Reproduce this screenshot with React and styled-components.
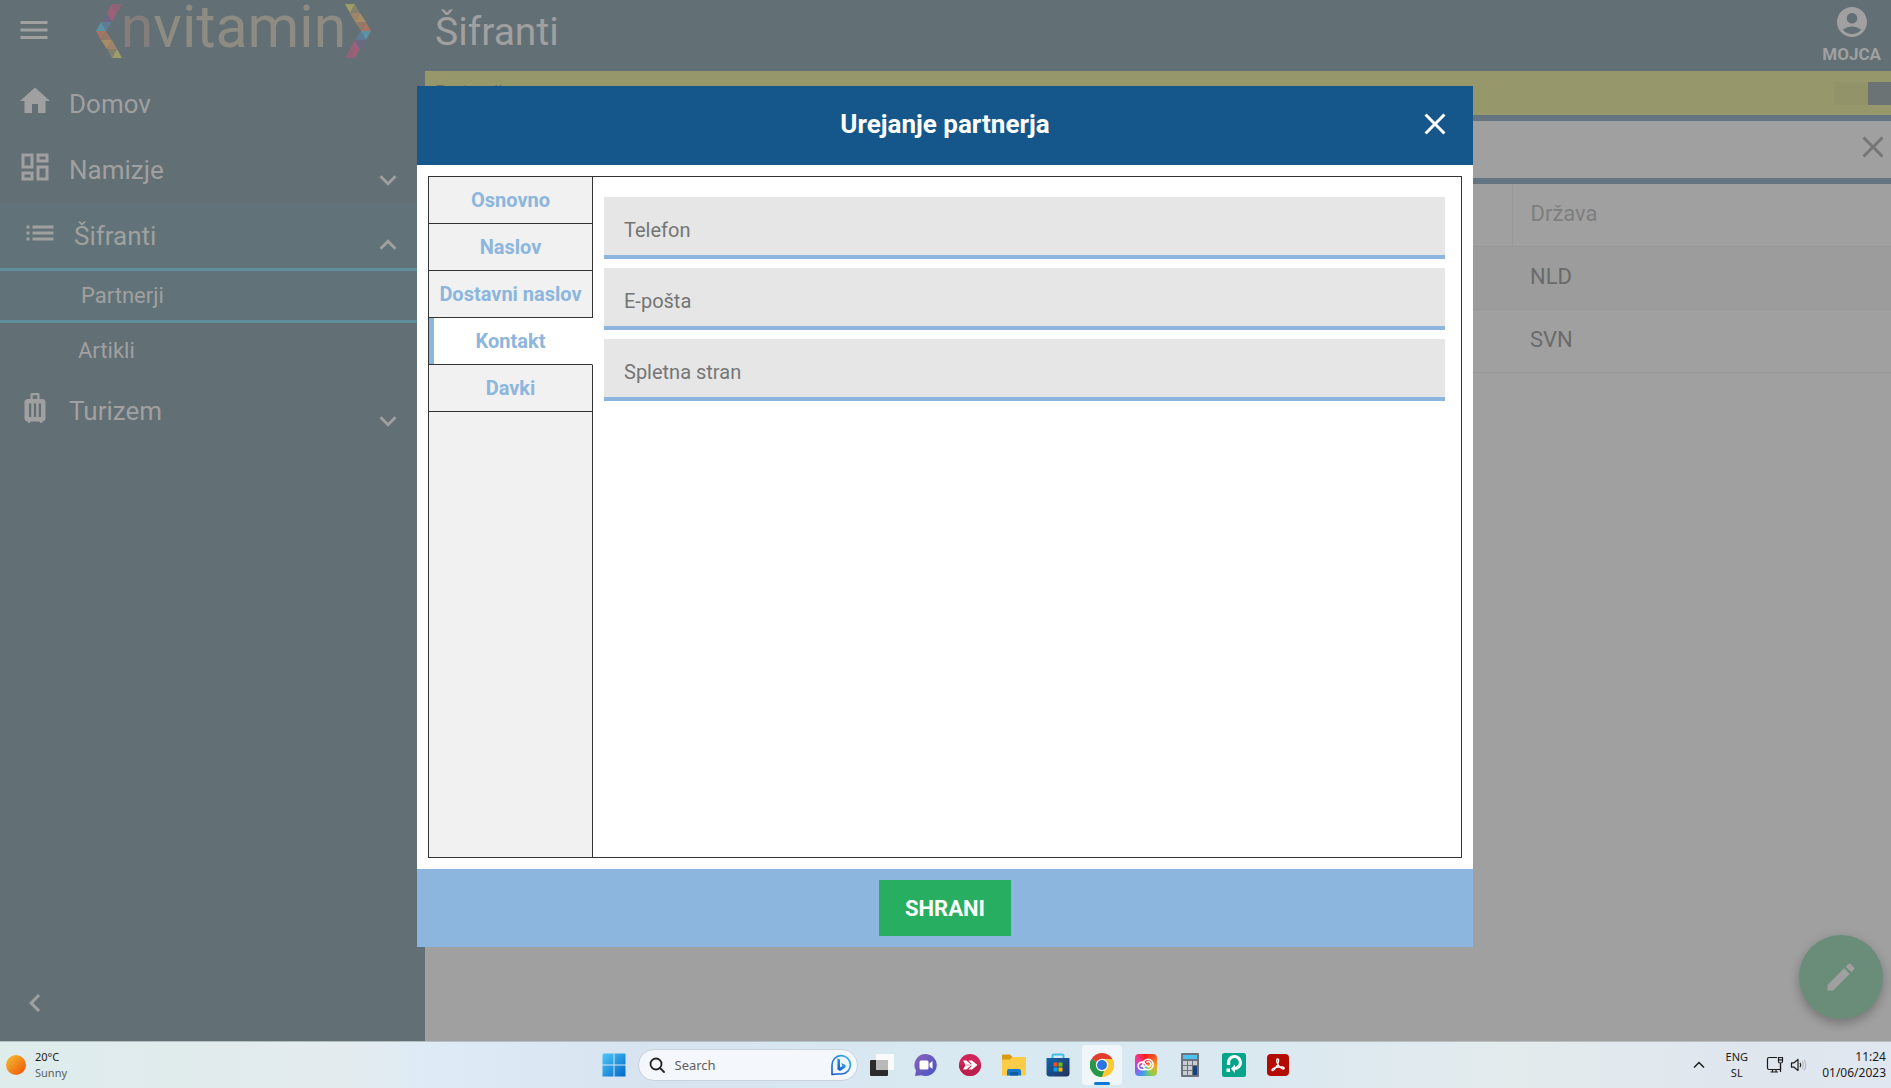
import React from 'react';
import styled, { createGlobalStyle, css } from 'styled-components';
import {
  MdMenu,
  MdHome,
  MdOutlineDashboard,
  MdList,
  MdLuggage,
  MdExpandMore,
  MdExpandLess,
  MdChevronLeft,
  MdAccountCircle,
  MdClose,
  MdModeEdit,
} from 'react-icons/md';

const MENU = [
  { id: 'home', label: 'Domov', icon: MdHome },
  { id: 'desk', label: 'Namizje', icon: MdOutlineDashboard, arrow: MdExpandMore },
  {
    id: 'codes',
    label: 'Šifranti',
    icon: MdList,
    arrow: MdExpandLess,
    active: true,
    children: [{ label: 'Partnerji', active: true }, { label: 'Artikli' }],
  },
  { id: 'tourism', label: 'Turizem', icon: MdLuggage, arrow: MdExpandMore },
];

const TABS = ['Osnovno', 'Naslov', 'Dostavni naslov', 'Kontakt', 'Davki'];

const FIELDS = [
  { name: 'phone', label: 'Telefon' },
  { name: 'email', label: 'E-pošta' },
  { name: 'web', label: 'Spletna stran' },
];

const COUNTRIES = ['NLD', 'SVN'];

const LogoBracket = ({ flip }) => (
  <Bracket viewBox="0 0 26 54" $flip={flip}>
    <path d="M16 0H26L21 9Z" fill="#8f6377" />
    <path d="M16 0L21 9H11Z" fill="#9a6179" />
    <path d="M11 9H21L16 18Z" fill="#9a6179" />
    <path d="M11 9L16 18H5Z" fill="#6c6883" />
    <path d="M5 18H16L10 27Z" fill="#5f7c96" />
    <path d="M5 18L10 27H0Z" fill="#5b93a5" />
    <path d="M0 27H10L5 36Z" fill="#a87463" />
    <path d="M10 27L16 36H5Z" fill="#93796a" />
    <path d="M5 36H16L11 45Z" fill="#a88c68" />
    <path d="M16 36L21 45H11Z" fill="#9c8568" />
    <path d="M11 45H21L16 54Z" fill="#857f70" />
    <path d="M21 45L26 54H16Z" fill="#9d9e66" />
  </Bracket>
);

const MenuEntry = ({ item }) => {
  const Icon = item.icon;
  const Arrow = item.arrow;
  return (
    <li>
      <MenuLink href="#" $active={item.active}>
        <Icon size={36} />
        <MenuText>{item.label}</MenuText>
        {Arrow && (
          <ArrowBox>
            <Arrow size={34} />
          </ArrowBox>
        )}
      </MenuLink>
      {item.children && (
        <List>
          {item.children.map(child => (
            <li key={child.label}>
              <SubLink href="#" $active={child.active}>
                {child.label}
              </SubLink>
            </li>
          ))}
        </List>
      )}
    </li>
  );
};

const Sidebar = () => (
  <Side>
    <SideHead>
      <IconButton aria-label="Meni">
        <MdMenu size={36} />
      </IconButton>
      <Logo>
        <LogoBracket />
        <LogoText>
          <span>n</span>vitamin
        </LogoText>
        <LogoBracket flip />
      </Logo>
    </SideHead>
    <List>
      {MENU.map(item => (
        <MenuEntry key={item.id} item={item} />
      ))}
    </List>
    <SideFoot>
      <IconButton aria-label="Skrij meni">
        <MdChevronLeft size={36} />
      </IconButton>
    </SideFoot>
  </Side>
);

const Page = () => (
  <Main>
    <PageHead>
      <PageTitle>Šifranti</PageTitle>
      <User>
        <MdAccountCircle size={36} />
        MOJCA
      </User>
    </PageHead>
    <SectionBar>
      <SectionName>Partnerji</SectionName>
      <Toggle aria-label="Preklop">
        <i />
        <b />
      </Toggle>
    </SectionBar>
    <SearchBar>
      <IconButton aria-label="Počisti" $color="#767676">
        <MdClose size={36} />
      </IconButton>
    </SearchBar>
    <Table>
      <thead>
        <tr>
          <th />
          <th>Država</th>
        </tr>
      </thead>
      <tbody>
        {COUNTRIES.map(code => (
          <tr key={code}>
            <td />
            <td>{code}</td>
          </tr>
        ))}
      </tbody>
    </Table>
    <Fab aria-label="Uredi">
      <MdModeEdit size={36} />
    </Fab>
  </Main>
);

const PartnerDialog = () => (
  <Overlay>
    <Dialog role="dialog" aria-labelledby="dialog-title">
      <DialogHead>
        <DialogTitle id="dialog-title">Urejanje partnerja</DialogTitle>
        <IconButton aria-label="Zapri" $color="#fff">
          <MdClose size={36} />
        </IconButton>
      </DialogHead>
      <DialogBody>
        <Box>
          <TabList role="tablist">
            {TABS.map(tab => (
              <Tab
                key={tab}
                role="tab"
                aria-selected={tab === 'Kontakt'}
                $active={tab === 'Kontakt'}
              >
                {tab}
              </Tab>
            ))}
            <TabRest />
          </TabList>
          <Fields>
            {FIELDS.map(field => (
              <Field
                key={field.name}
                name={field.name}
                aria-label={field.label}
                placeholder={field.label}
              />
            ))}
          </Fields>
        </Box>
      </DialogBody>
      <DialogFoot>
        <SaveButton>SHRANI</SaveButton>
      </DialogFoot>
    </Dialog>
  </Overlay>
);

const WindowsIcon = () => (
  <svg width="24" height="24" viewBox="0 0 24 24">
    <defs>
      <linearGradient id="win" x1="0" y1="0" x2="1" y2="1">
        <stop offset="0" stopColor="#4cc8f8" />
        <stop offset="1" stopColor="#0067c8" />
      </linearGradient>
    </defs>
    <path
      fill="url(#win)"
      d="M1.500 .5H11.500V11.500H.5V1.500ZM12.500 .5H23.500V11.500H12.500ZM.5 12.500H11.500V23.500H.5ZM12.500 12.500H23.500V23.500H12.500Z"
    />
  </svg>
);

const SearchIcon = () => (
  <svg width="16" height="16" viewBox="0 0 16 16" fill="none" stroke="#222" strokeWidth="1.800">
    <circle cx="7" cy="7" r="5.500" />
    <path d="M11 11L15 15" strokeLinecap="round" />
  </svg>
);

const BingIcon = () => (
  <svg width="22" height="22" viewBox="0 0 22 22">
    <defs>
      <linearGradient id="bing" x1="1" y1="0" x2="0" y2="1">
        <stop offset="0" stopColor="#35b8ea" />
        <stop offset="1" stopColor="#1b4fc4" />
      </linearGradient>
    </defs>
    <path
      d="M2 20.500V11A9.200 9.200 0 1 1 11.500 20H6.500Z"
      fill="#eef6fd"
      stroke="url(#bing)"
      strokeWidth="1.600"
      strokeLinejoin="round"
    />
    <path d="M7.500 4.500L10 5.500V13.500L12.500 12L11.200 9L15.500 11V13.500L10 17L7.500 15.500Z" fill="url(#bing)" />
  </svg>
);

const TaskViewIcon = () => (
  <svg width="24" height="24" viewBox="0 0 24 24">
    <rect x="0" y="7" width="18" height="16" rx="1" fill="#2b2b2b" />
    <rect x="6" y="1" width="18" height="16" rx="1" fill="#fafafa" />
    <rect x="6" y="7" width="12" height="10" fill="#b9b9b9" />
  </svg>
);

const ChatIcon = () => (
  <svg width="24" height="24" viewBox="0 0 24 24">
    <defs>
      <linearGradient id="chat" x1="0" y1="0" x2="1" y2="1">
        <stop offset="0" stopColor="#8a63b8" />
        <stop offset="1" stopColor="#4653c6" />
      </linearGradient>
    </defs>
    <path d="M12 1A11.500 11 0 1 1 7 22.200L1 23L2 17.500A11.500 11 0 0 1 12 1Z" fill="url(#chat)" />
    <rect x="5.500" y="7.500" width="9" height="9" rx="1.500" fill="#fff" />
    <path d="M15.500 10.500L18.500 8V16L15.500 13.500Z" fill="#fff" />
  </svg>
);

const ArrowsIcon = () => (
  <svg width="24" height="24" viewBox="0 0 24 24">
    <circle cx="12" cy="12" r="11" fill="#cf2457" />
    <path d="M1 12A11 11 0 0 0 23 12Z" fill="#bd1f4d" />
    <path d="M5 7.500H8.500L12.500 11H7Z" fill="#fff" />
    <path d="M5 16.500H8.500L12.500 13H7Z" fill="#fff" />
    <path d="M10.500 7.500H14L19.500 12L14 16.500H10.500L14 12.800H7V11.200H14Z" fill="#fff" />
  </svg>
);

const FolderIcon = () => (
  <svg width="24" height="24" viewBox="0 0 24 24">
    <path d="M0 2.500Q0 1.500 1 1.500H8L10.500 4H23Q24 4 24 5V8H0Z" fill="#d99c12" />
    <path d="M0 6.500H8L10.500 4H23Q24 4 24 5V22.500H0Z" fill="#fccb47" />
    <path d="M5 22.500V18Q5 16 7 16H17Q19 16 19 18V22.500Z" fill="#1279cc" />
    <path d="M8 22.500V20Q8 19 9 19H15Q16 19 16 20V22.500Z" fill="#0b5aa4" />
  </svg>
);

const StoreIcon = () => (
  <svg width="24" height="24" viewBox="0 0 24 24">
    <defs>
      <linearGradient id="store" x1="0" y1="0" x2="1" y2="1">
        <stop offset="0" stopColor="#0e67ae" />
        <stop offset="1" stopColor="#25305c" />
      </linearGradient>
    </defs>
    <path d="M6.500 6V2.500Q6.500 1.500 7.500 1.500H16.500Q17.500 1.500 17.500 2.500V6" fill="none" stroke="#43bdea" strokeWidth="2" />
    <path d="M.5 5H23.500V20.500Q23.500 23.500 20.500 23.500H3.500Q.5 23.500 .5 20.500Z" fill="url(#store)" />
    <path d="M7.500 9.500H11.500V13.500H7.500Z" fill="#f25022" />
    <path d="M12.500 9.500H16.500V13.500H12.500Z" fill="#7fba00" />
    <path d="M7.500 14.500H11.500V18.500H7.500Z" fill="#00a4ef" />
    <path d="M12.500 14.500H16.500V18.500H12.500Z" fill="#ffb900" />
  </svg>
);

const ChromeIcon = () => (
  <svg width="24" height="24" viewBox="0 0 24 24">
    <path d="M12 12L1.600 6A12 12 0 0 1 22.400 6Z" fill="#e33b2e" />
    <path d="M12 12L22.400 6A12 12 0 0 1 12 24Z" fill="#fcc934" />
    <path d="M12 12L12 24A12 12 0 0 1 1.600 6Z" fill="#279847" />
    <path d="M12 6H22.400A12 12 0 0 1 12 24L17.200 15Z" fill="#fcc934" />
    <path d="M1.600 6L6.800 15A6 6 0 0 0 14 17.700L12 24A12 12 0 0 1 1.600 6Z" fill="#279847" />
    <circle cx="12" cy="12" r="6.200" fill="#fff" />
    <circle cx="12" cy="12" r="5" fill="#2a74e6" />
  </svg>
);

const CloudIcon = () => (
  <CloudTile>
    <svg width="18" height="14" viewBox="0 0 18 14" fill="none" stroke="#fff" strokeWidth="1.500">
      <circle cx="11" cy="6.500" r="5.200" />
      <path d="M8.500 11.700H5A3.800 3.800 0 1 1 8.500 6.500L10.500 8.500A2.500 2.500 0 1 0 9.500 4.500" />
      <path d="M3.500 8.500Q6 6.500 8.500 9" />
    </svg>
  </CloudTile>
);

const CalcIcon = () => (
  <svg width="20" height="24" viewBox="0 0 20 24">
    <rect x="1" y="0" width="18" height="24" rx="1" fill="#6c757d" />
    <rect x="3" y="2" width="14" height="4" fill="#4cc2f1" />
    <path d="M3 8H7V12H3ZM8 8H12V12H8ZM13 8H17V12H13ZM3 13H7V17H3ZM8 13H12V17H8ZM3 18H7V22H3ZM8 18H12V22H8Z" fill="#c9ced2" />
    <path d="M13 13H17V22H13Z" fill="#14427f" />
  </svg>
);

const SupportIcon = () => (
  <svg width="24" height="24" viewBox="0 0 24 24">
    <rect width="24" height="24" rx="2.500" fill="#06a58b" />
    <path d="M6.500 12V10A6 6 0 1 1 12.500 15.500" fill="none" stroke="#fff" strokeWidth="3.200" />
    <path d="M13 11.500V20L9 15.800Z" fill="#fff" />
    <rect x="4.500" y="15.500" width="3.500" height="3.500" fill="#fff" />
  </svg>
);

const AcrobatIcon = () => (
  <svg width="22" height="22" viewBox="0 0 22 22">
    <rect width="22" height="22" rx="4" fill="#b30b00" />
    <path
      d="M10.500 5C12.500 5 11.500 8.500 10 11.500C8.500 14.500 6.500 17 5.200 16.500C4 15.500 7.500 13.500 11 13C14.500 12.500 17.500 13 17.200 14.500C16.500 16 13.500 14 11.500 11.500C9.800 9.200 9 5 10.500 5Z"
      fill="none"
      stroke="#fff"
      strokeWidth="1.300"
    />
  </svg>
);

const DisplayIcon = () => (
  <svg width="18" height="18" viewBox="0 0 18 18" fill="none" stroke="#1b1b1b" strokeWidth="1.200">
    <path d="M11 1.500H3Q1.500 1.500 1.500 3V12Q1.500 13.500 3 13.500H14.500V8M4.500 16H12M6.500 13.500V16M10 13.500V16" />
    <path d="M12.500 1.500H16.500V5.500Q16.500 7 14.500 7Q12.500 7 12.500 5.500ZM12.500 3.800H16.500M14.500 7V16" />
  </svg>
);

const SpeakerIcon = () => (
  <svg width="18" height="16" viewBox="0 0 18 16" fill="none" stroke="#1b1b1b" strokeWidth="1.200">
    <path d="M1.500 5.800H4L8 2.500V13.500L4 10.200H1.500Z" strokeLinejoin="round" />
    <path d="M10 5.800Q11.500 8 10 10.200" />
    <path d="M12 4Q14.500 8 12 12M14 2.500Q17.500 8 14 13.500" stroke="#b4bac1" />
  </svg>
);

const APPS = [
  { name: 'Task view', icon: TaskViewIcon },
  { name: 'Chat', icon: ChatIcon },
  { name: 'Remote', icon: ArrowsIcon },
  { name: 'Explorer', icon: FolderIcon },
  { name: 'Store', icon: StoreIcon },
  { name: 'Chrome', icon: ChromeIcon, open: true },
  { name: 'Creative Cloud', icon: CloudIcon },
  { name: 'Calculator', icon: CalcIcon },
  { name: 'Support', icon: SupportIcon },
  { name: 'Acrobat', icon: AcrobatIcon },
];

const Taskbar = () => (
  <Bar>
    <Weather>
      <Sun />
      <div>
        20°C
        <Muted>Sunny</Muted>
      </div>
    </Weather>
    <Apps>
      <AppButton aria-label="Start">
        <WindowsIcon />
      </AppButton>
      <SearchBox>
        <SearchIcon />
        <input type="text" placeholder="Search" aria-label="Search" />
        <BingIcon />
      </SearchBox>
      {APPS.map(({ name, icon: Icon, open }) => (
        <AppButton key={name} aria-label={name} $open={open}>
          <Icon />
        </AppButton>
      ))}
    </Apps>
    <Tray>
      <svg width="12" height="8" viewBox="0 0 12 8" fill="none" stroke="#1b1b1b" strokeWidth="1.500">
        <path d="M1 6.500L6 1.500L11 6.500" />
      </svg>
      <Language>
        <div>ENG</div>
        <div>SL</div>
      </Language>
      <TrayIcons>
        <DisplayIcon />
        <SpeakerIcon />
      </TrayIcons>
      <Clock>
        <div>11:24</div>
        <div>01/06/2023</div>
      </Clock>
    </Tray>
  </Bar>
);

export default function App() {
  return (
    <Screen>
      <GlobalStyle />
      <Desktop>
        <Sidebar />
        <Page />
        <PartnerDialog />
      </Desktop>
      <Taskbar />
    </Screen>
  );
}

const GlobalStyle = createGlobalStyle`
  * {
    box-sizing: border-box;
  }
  body {
    margin: 0;
    font-family: Roboto, sans-serif;
  }
  button,
  input {
    font-family: inherit;
    border: 0;
    border-radius: 0;
    padding: 0;
  }
  svg {
    display: block;
    flex-shrink: 0;
  }
`;

const Screen = styled.div`
  display: flex;
  flex-direction: column;
  height: 100vh;
`;

const Desktop = styled.div`
  position: relative;
  display: flex;
  flex: 1;
  min-height: 0;
  background: #a0a0a0;
`;

const IconButton = styled.button`
  display: flex;
  background: none;
  color: ${props => props.$color || '#a0a0a0'};
`;

const Side = styled.nav`
  display: flex;
  flex-direction: column;
  flex: 0 0 425px;
  background: #626f75;
  color: #a0a0a0;
`;

const SideHead = styled.div`
  display: flex;
  align-items: flex-start;
  height: 71px;
  padding: 4px 16px;
  gap: 44px;

  > button {
    margin-top: 8px;
  }
`;

const Logo = styled.div`
  display: flex;
  align-items: flex-start;
  justify-content: space-between;
  width: 275px;
`;

const Bracket = styled.svg`
  width: 26px;
  height: 54px;
  transform: ${props => (props.$flip ? 'rotate(180deg)' : 'none')};
`;

const LogoText = styled.div`
  margin: 0 -4px;
  color: #8e8b83;
  font-size: 59px;
  line-height: 46px;

  span {
    color: #857d7c;
  }
`;

const List = styled.ul`
  margin: 0;
  padding: 0;
  list-style: none;
`;

const MenuLink = styled.a`
  display: flex;
  align-items: center;
  height: ${props => (props.$active ? 65 : 66)}px;
  padding: 0 20px 0 ${props => (props.$active ? 22 : 17)}px;
  gap: 16px;
  color: inherit;
  font-size: 26px;
  text-decoration: none;
  background: ${props => (props.$active ? '#617379' : 'none')};

  > svg {
    margin-bottom: 6px;
  }
`;

const MenuText = styled.span`
  flex: 1;
`;

const ArrowBox = styled.span`
  align-self: flex-end;
  padding-bottom: 6px;
`;

const SubLink = styled.a`
  display: flex;
  align-items: center;
  height: 55px;
  padding-left: 78px;
  color: inherit;
  font-size: 22px;
  text-decoration: none;
  ${props =>
    props.$active &&
    css`
      padding-left: 81px;
      background: #617379;
      border-top: 3px solid #5f8f9f;
      border-bottom: 3px solid #5f8f9f;
    `}
`;

const SideFoot = styled.div`
  margin-top: auto;
  padding: 20px 17px;
`;

const Main = styled.main`
  display: flex;
  flex-direction: column;
  flex: 1;
  min-width: 0;
`;

const PageHead = styled.header`
  display: flex;
  justify-content: space-between;
  height: 71px;
  padding: 4px 10px;
  background: #626f75;
  color: #a0a0a0;
`;

const PageTitle = styled.h1`
  margin: 0;
  font-size: 39px;
  font-weight: 400;
  line-height: 56px;
`;

const User = styled.div`
  display: flex;
  flex-direction: column;
  align-items: center;
  font-size: 17px;
  font-weight: 700;
  line-height: 28px;
`;

const SectionBar = styled.div`
  display: flex;
  align-items: center;
  justify-content: space-between;
  height: 44px;
  padding-left: 10px;
  background: #96976a;
`;

const SectionName = styled.span`
  padding-bottom: 3px;
  color: #63706c;
  font-size: 18px;
`;

const Toggle = styled.button`
  display: flex;
  height: 23px;
  background: #929368;

  i {
    width: 34px;
  }
  b {
    width: 23px;
    height: 23px;
    background: #6b7375;
  }
`;

const SearchBar = styled.div`
  display: flex;
  align-items: center;
  justify-content: flex-end;
  height: 69px;
  padding-bottom: 5px;
  border-top: 6px solid #647581;
  border-bottom: 6px solid #647581;
`;

const Table = styled.table`
  width: 100%;
  border-collapse: collapse;
  table-layout: fixed;
  font-size: 22px;
  color: #6a6a6a;

  th,
  td {
    height: 63px;
    padding: 0 18px 2px;
    border-bottom: 1px solid #989898;
    text-align: left;
  }
  th {
    height: 62px;
    color: #7e7e7e;
    font-weight: 400;
  }
  th:first-child {
    border-right: 1px solid #989898;
  }
  th:last-child {
    width: 379px;
  }
  tbody tr:nth-child(odd) {
    background: #9c9c9c;
  }
`;

const Fab = styled.button`
  position: absolute;
  right: 8px;
  bottom: 22px;
  display: flex;
  align-items: center;
  justify-content: center;
  width: 84px;
  height: 84px;
  border-radius: 50%;
  background: #6a8d7a;
  color: #a0a0a0;
  box-shadow: 0 5px 10px rgba(0, 0, 0, 0.2), 0 2px 14px rgba(0, 0, 0, 0.08);
`;

const Overlay = styled.div`
  position: absolute;
  inset: 0;
  display: flex;
  justify-content: center;
  padding: 86px 1px 94px 0;
  pointer-events: none;
`;

const Dialog = styled.div`
  display: flex;
  flex-direction: column;
  width: 100%;
  max-width: 1056px;
  background: #fff;
  pointer-events: auto;
`;

const DialogHead = styled.div`
  display: grid;
  grid-template-columns: 36px 1fr 36px;
  align-items: center;
  height: 79px;
  padding: 0 20px 3px;
  background: #15578b;
  color: #fff;
`;

const DialogTitle = styled.h2`
  grid-column: 2;
  margin: 0;
  font-size: 26px;
  font-weight: 700;
  text-align: center;
`;

const DialogBody = styled.div`
  display: flex;
  flex: 1;
  padding: 11px;
`;

const Box = styled.div`
  display: flex;
  flex: 1;
  border: 1px solid #333;
`;

const TabList = styled.div`
  display: flex;
  flex-direction: column;
  flex: 0 0 164px;
`;

const Tab = styled.button`
  height: 47px;
  border-right: 1px solid #333;
  border-bottom: 1px solid #333;
  background: #f1f1f1;
  color: #8cb6dd;
  font-size: 20px;
  font-weight: 700;
  white-space: nowrap;
  ${props =>
    props.$active &&
    css`
      border-right-color: #fff;
      background: #fff;
      box-shadow: inset 5px 0 #8cb6dd;
    `}
`;

const TabRest = styled.div`
  flex: 1;
  border-right: 1px solid #333;
  background: #f1f1f1;
`;

const Fields = styled.div`
  display: flex;
  flex-direction: column;
  flex: 1;
  gap: 9px;
  padding: 20px 16px 20px 11px;
`;

const Field = styled.input`
  height: 62px;
  padding: 8px 20px 0;
  border-bottom: 4px solid #8cb6dd;
  background: #e6e6e6;
  color: #333;
  font-size: 20px;

  &::placeholder {
    color: #757575;
  }
`;

const DialogFoot = styled.div`
  display: flex;
  justify-content: center;
  padding: 11px;
  background: #8cb6dd;
`;

const SaveButton = styled.button`
  width: 132px;
  height: 56px;
  background: #27ae60;
  color: #fff;
  font-size: 22px;
  font-weight: 700;
`;

const Bar = styled.footer`
  display: grid;
  grid-template-columns: 1fr auto 1fr;
  align-items: center;
  height: 47px;
  border-top: 1px solid #b4bfc2;
  background: linear-gradient(
    90deg,
    #deecec 0%,
    #e3ebee 18%,
    #deebf6 23%,
    #d8e3f0 34%,
    #d8e9f1 50%,
    #d9e8f1 64%,
    #e3ebed 80%,
    #dfe6ee 92%,
    #e1e7f0 100%
  );
  color: #1b1b1b;
  font-family: 'Noto Sans', sans-serif;
  font-size: 11px;
  line-height: 16px;
`;

const Weather = styled.div`
  display: flex;
  align-items: center;
  padding-left: 6px;
  gap: 9px;
`;

const Sun = styled.div`
  width: 20px;
  height: 20px;
  border-radius: 50%;
  background: linear-gradient(135deg, #f2c335, #f0600c 85%);
`;

const Muted = styled.div`
  color: #566063;
`;

const Apps = styled.div`
  display: flex;
  align-items: center;
`;

const AppButton = styled.button`
  position: relative;
  display: flex;
  align-items: center;
  justify-content: center;
  width: 40px;
  height: 40px;
  margin: 0 2px;
  border-radius: 4px;
  background: ${props => (props.$open ? 'rgba(255, 255, 255, 0.6)' : 'none')};
  ${props =>
    props.$open &&
    css`
      &::after {
        content: '';
        position: absolute;
        bottom: 0;
        left: 12px;
        right: 12px;
        height: 3px;
        border-radius: 2px;
        background: #0a78d4;
      }
    `}
`;

const SearchBox = styled.label`
  display: flex;
  align-items: center;
  width: 220px;
  height: 32px;
  margin: 0 2px;
  padding: 0 5px 0 10px;
  gap: 10px;
  border: 1px solid #c9d2dc;
  border-radius: 16px;
  background: #f4f7fb;

  input {
    flex: 1;
    min-width: 0;
    background: none;
    font-size: 13px;
    outline: none;
  }
  input::placeholder {
    color: #5f6062;
  }
`;

const CloudTile = styled.span`
  display: flex;
  align-items: center;
  justify-content: center;
  width: 22px;
  height: 22px;
  border-radius: 4px;
  background: conic-gradient(from 45deg, #f0532a, #f5a623, #8bd14a, #3aa0f0, #a44ff0, #f03a9a, #ff1a1a, #f0532a);
`;

const Tray = styled.div`
  display: flex;
  align-items: center;
  justify-content: flex-end;
  padding-right: 5px;
`;

const Language = styled.div`
  margin: 0 18px 0 21px;
  text-align: center;
`;

const TrayIcons = styled.div`
  display: flex;
  align-items: center;
  gap: 6px;
`;

const Clock = styled.div`
  min-width: 78px;
  font-size: 12px;
  text-align: right;
`;
